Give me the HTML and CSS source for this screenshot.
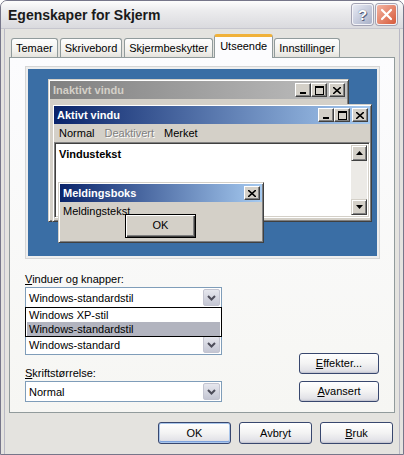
FILE: index.html
```html
<!DOCTYPE html>
<html lang="no">
<head>
  <meta charset="UTF-8">
  <title>Egenskaper for Skjerm</title>
  <link rel="stylesheet" href="styles.css">
</head>
<body>
  <div class="window">
    <div class="titlebar">
      <span class="title">Egenskaper for Skjerm</span>
      <span class="tb-btn help">?</span>
      <span class="tb-btn close">
        <svg width="13" height="13" viewBox="0 0 13 13"><path d="M2 2 L11 11 M11 2 L2 11" stroke="#fff" stroke-width="2.2" stroke-linecap="round"/></svg>
      </span>
    </div>

    <div class="client">
      <div class="tabs">
        <div class="tab">Temaer</div>
        <div class="tab">Skrivebord</div>
        <div class="tab">Skjermbeskytter</div>
        <div class="tab active">Utseende</div>
        <div class="tab">Innstillinger</div>
      </div>

      <div class="panel">
        <div class="preview">
          <div class="desktop">

            <div class="cwin inactive-win">
              <div class="caption inactive">
                <span class="cap-text">Inaktivt vindu</span>
                <span class="cbtn"><svg width="8" height="7" viewBox="0 0 8 7"><rect x="1" y="5" width="6" height="2" fill="#000"/></svg></span>
                <span class="cbtn"><svg width="9" height="9" viewBox="0 0 9 9"><rect x="0.5" y="0.5" width="8" height="8" fill="none" stroke="#000"/><rect x="0" y="0" width="9" height="2" fill="#000"/></svg></span>
                <span class="cbtn gap"><svg width="8" height="7" viewBox="0 0 8 7"><path d="M0 0 L8 7 M8 0 L0 7" stroke="#000" stroke-width="1.6"/></svg></span>
              </div>
            </div>

            <div class="cwin active-win">
              <div class="caption">
                <span class="cap-text">Aktivt vindu</span>
                <span class="cbtn"><svg width="8" height="7" viewBox="0 0 8 7"><rect x="1" y="5" width="6" height="2" fill="#000"/></svg></span>
                <span class="cbtn"><svg width="9" height="9" viewBox="0 0 9 9"><rect x="0.5" y="0.5" width="8" height="8" fill="none" stroke="#000"/><rect x="0" y="0" width="9" height="2" fill="#000"/></svg></span>
                <span class="cbtn gap"><svg width="8" height="7" viewBox="0 0 8 7"><path d="M0 0 L8 7 M8 0 L0 7" stroke="#000" stroke-width="1.6"/></svg></span>
              </div>
              <div class="menubar">
                <span>Normal</span>
                <span class="disabled">Deaktivert</span>
                <span>Merket</span>
              </div>
              <div class="textarea">
                <div class="wintext">Vindustekst</div>
                <div class="scrollbar">
                  <span class="sbtn"><svg width="7" height="4" viewBox="0 0 7 4"><path d="M3.5 0 L7 4 L0 4 Z" fill="#000"/></svg></span>
                  <span class="sbtn"><svg width="7" height="4" viewBox="0 0 7 4"><path d="M0 0 L7 0 L3.5 4 Z" fill="#000"/></svg></span>
                </div>
              </div>
            </div>

            <div class="cwin msgbox">
              <div class="caption">
                <span class="cap-text">Meldingsboks</span>
                <span class="cbtn"><svg width="8" height="7" viewBox="0 0 8 7"><path d="M0 0 L8 7 M8 0 L0 7" stroke="#000" stroke-width="1.6"/></svg></span>
              </div>
              <div class="msgtext">Meldingstekst</div>
              <div class="cbutton">OK</div>
            </div>

          </div>
        </div>

        <div class="controls">
          <div class="fields">
            <div class="label"><u>V</u>induer og knapper:</div>
            <div class="select">
              <span class="value">Windows-standardstil</span>
              <span class="arrow"><svg width="9" height="6" viewBox="0 0 9 6"><path d="M1 1 L4.5 4.5 L8 1" fill="none" stroke="#4d4d5a" stroke-width="2"/></svg></span>
              <div class="listbox">
                <div class="item">Windows XP-stil</div>
                <div class="item selected">Windows-standardstil</div>
              </div>
            </div>
            <!-- label for the colour scheme is hidden under the open list -->
            <div class="label"></div>
            <div class="select">
              <span class="value">Windows-standard</span>
              <span class="arrow"><svg width="9" height="6" viewBox="0 0 9 6"><path d="M1 1 L4.5 4.5 L8 1" fill="none" stroke="#4d4d5a" stroke-width="2"/></svg></span>
            </div>
            <div class="label"><u>S</u>kriftstørrelse:</div>
            <div class="select">
              <span class="value">Normal</span>
              <span class="arrow"><svg width="9" height="6" viewBox="0 0 9 6"><path d="M1 1 L4.5 4.5 L8 1" fill="none" stroke="#4d4d5a" stroke-width="2"/></svg></span>
            </div>
          </div>
          <div class="side-buttons">
            <div class="button"><u>E</u>ffekter...</div>
            <div class="button"><u>A</u>vansert</div>
          </div>
        </div>
      </div>

      <div class="dialog-buttons">
        <div class="button default">OK</div>
        <div class="button">Avbryt</div>
        <div class="button"><u>B</u>ruk</div>
      </div>
    </div>
  </div>
</body>
</html>
```

FILE: styles.css
```css
body {
  margin: 0;
  background: #fff;
  font-family: "Liberation Sans", Arial, sans-serif;
  font-size: 11px;
  color: #000;
}
.window {
  width: 404px;
  height: 455px;
  box-sizing: border-box;
  border: 1px solid #76768a;
  border-radius: 7px 7px 0 0;
  background: #e4e3df;
  overflow: hidden;
}
.titlebar {
  height: 27px;
  display: flex;
  align-items: center;
  padding: 0 6px 0 7px;
  background: linear-gradient(#fdfdfd, #ececee 35%, #dadade);
  border-bottom: 1px solid #c6c6ce;
}
.title {
  flex: 1;
  font-size: 14px;
  font-weight: bold;
  color: #1a1a1a;
}
.tb-btn {
  width: 19px;
  height: 19px;
  border: 1px solid #f4f4f8;
  border-radius: 3px;
  margin-left: 2px;
  display: flex;
  align-items: center;
  justify-content: center;
  box-shadow: 0 0 0 1px #a3a3b3;
}
.help {
  background: linear-gradient(135deg, #e7eaf3, #a9b1c8);
  color: #fff;
  font-size: 15px;
  font-weight: bold;
  text-shadow: 0 0 1px #47506a, 1px 1px 0 #5a6380;
}
.close {
  margin-left: 3px;
  background: linear-gradient(135deg, #f4b5a2, #d6593a);
}
.client {
  height: 426px;
  box-sizing: border-box;
  margin: 0 3px;
  padding: 5px 4px 0 4px;
  border-left: 1px solid #b9b9c5;
  border-right: 1px solid #b9b9c5;
  border-bottom: 1px solid #b9b9c5;
}

/* tabs */
.tabs {
  display: flex;
  align-items: flex-end;
  height: 23px;
  padding-left: 2px;
  position: relative;
  z-index: 1;
}
.tab {
  height: 19px;
  box-sizing: border-box;
  padding: 0 4px;
  line-height: 18px;
  margin-right: 2px;
  border: 1px solid #919b9c;
  border-bottom: none;
  border-radius: 3px 3px 0 0;
  background: linear-gradient(#fefefe, #f1f0ec 70%, #e4e2dc);
  color: #000;
}
.tab.active {
  height: 24px;
  line-height: 19px;
  margin: 0 1px -1px -1px;
  padding: 0 5px;
  border-top: 3px solid #f0b13a;
  background: #fcfcfe;
}
.panel {
  height: 356px;
  box-sizing: border-box;
  border: 1px solid #919b9c;
  background: linear-gradient(#fcfcfe, #f6f6f3);
}

/* preview of classic windows */
.preview {
  margin: 8px 0 0 15px;
  width: 355px;
  height: 193px;
  box-sizing: border-box;
  border: 1px solid #d6d6d6;
  padding: 2px;
  background: #eeeeee;
}
.desktop {
  position: relative;
  height: 100%;
  background: #3a6ea5;
  overflow: hidden;
  font-family: "Liberation Sans", Arial, sans-serif;
  font-size: 11px;
}
.cwin {
  position: absolute;
  box-sizing: border-box;
  padding: 1px;
  background: #d4d0c8;
  border: 1px solid;
  border-color: #d4d0c8 #404040 #404040 #d4d0c8;
  box-shadow: inset 1px 1px #fff, inset -1px -1px #808080;
}
.inactive-win {
  left: 20px;
  top: 10px;
  width: 301px;
  height: 143px;
}
.active-win {
  left: 24px;
  top: 35px;
  width: 320px;
  height: 118px;
}
.msgbox {
  left: 30px;
  top: 113px;
  width: 206px;
  height: 61px;
}
.caption {
  height: 18px;
  display: flex;
  align-items: center;
  padding: 0 2px 0 3px;
  background: linear-gradient(to right, #0a246a, #a6caf0);
  color: #fff;
  font-weight: bold;
}
.caption.inactive {
  background: linear-gradient(to right, #808080, #c0c0c0);
  color: #d4d0c8;
}
.cap-text {
  flex: 1;
}
.cbtn {
  width: 16px;
  height: 14px;
  box-sizing: border-box;
  display: flex;
  align-items: center;
  justify-content: center;
  background: #d4d0c8;
  border: 1px solid;
  border-color: #fff #404040 #404040 #fff;
  box-shadow: inset -1px -1px #808080;
}
.cbtn.gap {
  margin-left: 2px;
}
.menubar {
  height: 18px;
  line-height: 18px;
  padding-left: 5px;
  display: flex;
  gap: 10px;
}
.menubar .disabled {
  color: #808080;
  text-shadow: 1px 1px 0 #fff;
}
.textarea {
  height: 76px;
  box-sizing: border-box;
  display: flex;
  background: #fff;
  border: 1px solid;
  border-color: #808080 #fff #fff #808080;
  box-shadow: inset 1px 1px #404040, inset -1px -1px #d4d0c8;
  padding: 2px;
}
.wintext {
  flex: 1;
  padding: 3px 0 0 2px;
  font-weight: bold;
}
.scrollbar {
  width: 16px;
  display: flex;
  flex-direction: column;
  justify-content: space-between;
  background: #eceae6;
}
.sbtn {
  width: 16px;
  height: 16px;
  box-sizing: border-box;
  display: flex;
  align-items: center;
  justify-content: center;
  background: #d4d0c8;
  border: 1px solid;
  border-color: #d4d0c8 #404040 #404040 #d4d0c8;
  box-shadow: inset 1px 1px #fff, inset -1px -1px #808080;
}
.msgtext {
  padding: 3px 0 0 3px;
}
.cbutton {
  position: absolute;
  left: 66px;
  top: 31px;
  width: 71px;
  height: 24px;
  box-sizing: border-box;
  line-height: 21px;
  text-align: center;
  background: #d4d0c8;
  border: 1px solid #000;
  box-shadow: inset 1px 1px #fff, inset -1px -1px #404040, inset -2px -2px #808080;
}

/* form controls */
.controls {
  display: flex;
  margin: 13px 15px 0 15px;
}
.fields {
  width: 197px;
}
.label {
  height: 14px;
  line-height: 14px;
  margin-bottom: 1px;
  color: #000;
}
.select {
  position: relative;
  height: 21px;
  box-sizing: border-box;
  border: 1px solid #7f9db9;
  background: #fff;
  display: flex;
  align-items: center;
  margin-bottom: 11px;
}
.select:last-child {
  margin-bottom: 0;
}
.value {
  flex: 1;
  padding-left: 3px;
}
.arrow {
  width: 15px;
  height: 15px;
  margin-right: 1px;
  display: flex;
  align-items: center;
  justify-content: center;
  border: 1px solid #c3c4d0;
  border-radius: 2px;
  background: linear-gradient(#e6e7ee, #c4c6d3);
}
.listbox {
  position: absolute;
  left: -1px;
  right: -1px;
  top: 19px;
  z-index: 2;
  border: 1px solid #000;
  background: #fff;
  padding: 0 1px 0 1px;
}
.item {
  height: 14px;
  line-height: 14px;
  padding-left: 2px;
}
.item.selected {
  background: #b2b4bf;
}
.side-buttons {
  margin-left: auto;
  display: flex;
  flex-direction: column;
  justify-content: flex-end;
  gap: 7px;
}
.button {
  width: 80px;
  height: 21px;
  box-sizing: border-box;
  line-height: 19px;
  text-align: center;
  border: 1px solid #38476e;
  border-radius: 3px;
  background: linear-gradient(#ffffff, #f3f3f3 50%, #e3e3e8 85%, #cfd0d8);
  box-shadow: inset 0 -1px 0 #c6c7d2;
}
.dialog-buttons {
  display: flex;
  justify-content: flex-end;
  gap: 8px;
  margin: 9px 2px 0 0;
}
.dialog-buttons .button {
  width: 73px;
  height: 22px;
  line-height: 20px;
}
.button.default {
  box-shadow: inset 0 0 0 1px #a9c6ec, inset 0 -1px 0 1px #7ea4de;
}
```
